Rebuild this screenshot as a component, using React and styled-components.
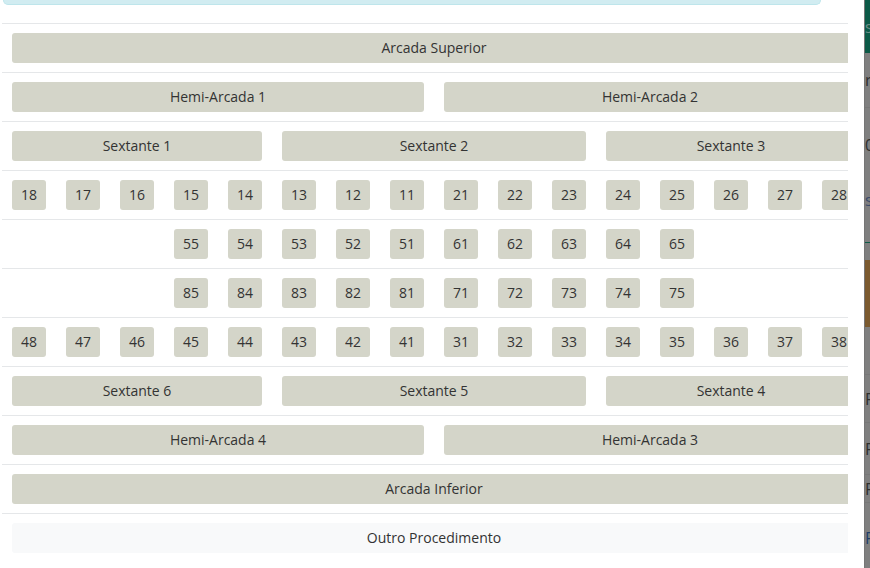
import React from 'react';
import styled, { createGlobalStyle } from 'styled-components';

const GlobalStyle = createGlobalStyle`
  html, body {
    margin: 0;
    padding: 0;
    background: #7f7f7f;
    font-family: "Open Sans", "Liberation Sans", sans-serif;
  }
`

const Page = styled.div`
  display: flex;
  width: 870px;
  height: 568px;
  overflow: hidden;
`

const Modal = styled.div`
  width: 862px;
  flex-shrink: 0;
  background: #ffffff;
  padding-left: 2px;
  display: flex;
  flex-direction: column;
`

const Alert = styled.div`
  width: 816px;
  height: 4px;
  margin-left: 1px;
  background: #d1ecf1;
  border: 1px solid #bee5eb;
  border-top: none;
  border-radius: 0 0 5px 5px;
`

const Table = styled.div`
  width: 846px;
  margin-top: 18px;
  overflow: hidden;
`

const Row = styled.div`
  display: grid;
  grid-template-columns: repeat(16, 34px);
  column-gap: 20px;
  padding: 9px 10px;
  border-top: 1px solid #e5e7e9;
`

const Btn = styled.div`
  grid-column: ${({ $start, $span }) => `${$start} / span ${$span}`};
  height: 30px;
  box-sizing: border-box;
  padding-bottom: 2px;
  display: flex;
  align-items: center;
  justify-content: center;
  border-radius: 3px;
  background: ${({ $light }) => ($light ? '#f8f9fa' : '#d4d5c9')};
  color: #333333;
  font-size: 14px;
  white-space: nowrap;
`

const Backdrop = styled.div`
  flex: 1;
  display: flex;
  flex-direction: column;
  background: #7f7f7f;
  border-left: 1px solid #767676;
  font-size: 16px;
  color: #333;
  overflow: hidden;
`

const BackBlock = styled.div`
  height: ${({ $h }) => $h}px;
  flex-shrink: 0;
  box-sizing: border-box;
  background: ${({ $bg }) => $bg || 'transparent'};
  border-bottom: ${({ $line }) => ($line ? `1px solid ${$line}` : 'none')};
  color: ${({ $color }) => $color || '#2e2e2e'};
  display: flex;
  align-items: center;
  line-height: 1;
`

const upper = ['18', '17', '16', '15', '14', '13', '12', '11', '21', '22', '23', '24', '25', '26', '27', '28']
const decUpper = ['55', '54', '53', '52', '51', '61', '62', '63', '64', '65']
const decLower = ['85', '84', '83', '82', '81', '71', '72', '73', '74', '75']
const lower = ['48', '47', '46', '45', '44', '43', '42', '41', '31', '32', '33', '34', '35', '36', '37', '38']

function TeethRow({ teeth, offset = 0 }) {
  return (
    <Row>
      {teeth.map((t, i) => (
        <Btn key={t} $start={i + 1 + offset} $span={1}>{t}</Btn>
      ))}
    </Row>
  )
}

export default function App() {
  return (
    <>
      <GlobalStyle />
      <Page>
        <Modal>
          <Alert />
          <Table>
            <Row>
              <Btn $start={1} $span={16}>Arcada Superior</Btn>
            </Row>
            <Row>
              <Btn $start={1} $span={8}>Hemi-Arcada 1</Btn>
              <Btn $start={9} $span={8}>Hemi-Arcada 2</Btn>
            </Row>
            <Row>
              <Btn $start={1} $span={5}>Sextante 1</Btn>
              <Btn $start={6} $span={6}>Sextante 2</Btn>
              <Btn $start={12} $span={5}>Sextante 3</Btn>
            </Row>
            <TeethRow teeth={upper} />
            <TeethRow teeth={decUpper} offset={3} />
            <TeethRow teeth={decLower} offset={3} />
            <TeethRow teeth={lower} />
            <Row>
              <Btn $start={1} $span={5}>Sextante 6</Btn>
              <Btn $start={6} $span={6}>Sextante 5</Btn>
              <Btn $start={12} $span={5}>Sextante 4</Btn>
            </Row>
            <Row>
              <Btn $start={1} $span={8}>Hemi-Arcada 4</Btn>
              <Btn $start={9} $span={8}>Hemi-Arcada 3</Btn>
            </Row>
            <Row>
              <Btn $start={1} $span={16}>Arcada Inferior</Btn>
            </Row>
            <Row>
              <Btn $start={1} $span={16} $light>Outro Procedimento</Btn>
            </Row>
          </Table>
        </Modal>
        <Backdrop>
          <BackBlock $h={53} $bg="#0c5a47" $color="#6f8f86">s</BackBlock>
          <BackBlock $h={55} $line="#777">r</BackBlock>
          <BackBlock $h={74}>0:</BackBlock>
          <BackBlock $h={36} $color="#3a4a6a">s</BackBlock>
          <BackBlock $h={25} $line="#0e5c48" />
          <BackBlock $h={17} />
          <BackBlock $h={67} $bg="#7b5a2f" />
          <BackBlock $h={48} $line="#777" />
          <BackBlock $h={48} $line="#777">R</BackBlock>
          <BackBlock $h={52} $line="#777">R</BackBlock>
          <BackBlock $h={28} $line="#777">R</BackBlock>
          <BackBlock $h={70} $color="#1f3f6a">R</BackBlock>
        </Backdrop>
      </Page>
    </>
  )
}
